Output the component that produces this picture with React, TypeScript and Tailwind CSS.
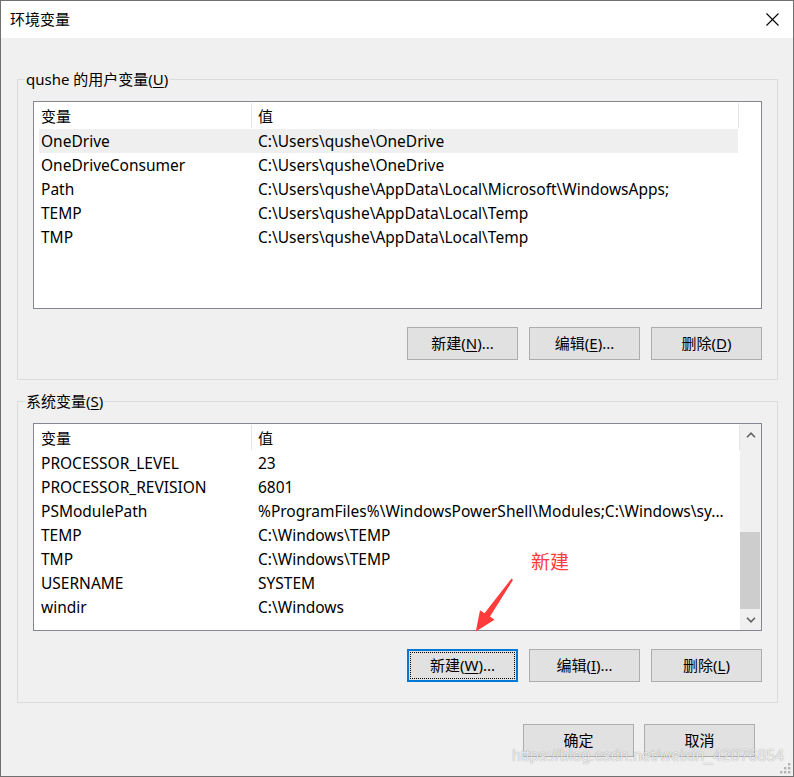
import type { ReactNode } from "react"

const userVars = [
  ["OneDrive", "C:\\Users\\qushe\\OneDrive"],
  ["OneDriveConsumer", "C:\\Users\\qushe\\OneDrive"],
  ["Path", "C:\\Users\\qushe\\AppData\\Local\\Microsoft\\WindowsApps;"],
  ["TEMP", "C:\\Users\\qushe\\AppData\\Local\\Temp"],
  ["TMP", "C:\\Users\\qushe\\AppData\\Local\\Temp"],
]

const sysVars = [
  ["PROCESSOR_LEVEL", "23"],
  ["PROCESSOR_REVISION", "6801"],
  ["PSModulePath", "%ProgramFiles%\\WindowsPowerShell\\Modules;C:\\Windows\\sy..."],
  ["TEMP", "C:\\Windows\\TEMP"],
  ["TMP", "C:\\Windows\\TEMP"],
  ["USERNAME", "SYSTEM"],
  ["windir", "C:\\Windows"],
]

function Btn({ children, focused }: { children: ReactNode; focused?: boolean }) {
  if (focused) {
    return (
      <button className="w-[111px] h-[33px] bg-[#e1e1e1] border-2 border-[#0078d7] p-[1px]">
        <div className="w-full h-full border border-dotted border-black flex items-center justify-center">
          {children}
        </div>
      </button>
    )
  }
  return (
    <button className="w-[111px] h-[33px] bg-[#e1e1e1] border border-[#adadad] flex items-center justify-center">
      {children}
    </button>
  )
}

function Header({ last }: { last: number }) {
  return (
    <div className="flex h-[27px]">
      <div className="w-[218px] pl-[7px] pt-[2px] flex items-center border-r border-[#e5e5e5] my-[1px]">变量</div>
      <div
        className={`${last === 487 ? "w-[487px]" : "w-[488px]"} pl-[6px] pt-[2px] flex items-center border-r border-[#e5e5e5] my-[1px]`}
      >
        值
      </div>
    </div>
  )
}

function Rows({ items, selected }: { items: string[][]; selected?: number }) {
  return (
    <div className="flex flex-col text-[15.5px]">
      {items.map(([name, value], i) => (
        <div
          key={i}
          className={`ml-[5px] w-[699px] h-[24px] pl-[2px] pt-[2px] flex items-center whitespace-nowrap ${
            i === selected ? "bg-[#efefef]" : ""
          }`}
        >
          <div className="w-[217px] shrink-0">{name}</div>
          <div className="overflow-hidden">{value}</div>
        </div>
      ))}
    </div>
  )
}

function Chevron({ up }: { up?: boolean }) {
  return (
    <svg width="10" height="6" viewBox="0 0 10 6" className="block">
      <path
        d={up ? "M1 5.2 L5 1.2 L9 5.2" : "M1 0.8 L5 4.8 L9 0.8"}
        fill="none"
        stroke="#606060"
        strokeWidth="1.6"
      />
    </svg>
  )
}

export default function App() {
  return (
    <div className="relative w-[794px] h-[777px] bg-[#f0f0f0] border border-[#707070] font-['Noto_Sans','Noto_Sans_CJK_SC',sans-serif] text-[15px] text-black overflow-hidden">
      {/* title bar */}
      <div className="h-[37px] bg-white flex items-center justify-between pl-[9px] pr-[14px] font-['Noto_Sans_CJK_SC',sans-serif]">
        <span>环境变量</span>
        <svg width="13" height="13" viewBox="0 0 13 13">
          <path d="M0.5 0.5 L12.5 12.5 M12.5 0.5 L0.5 12.5" stroke="#000" strokeWidth="1.1" />
        </svg>
      </div>

      {/* user variables */}
      <fieldset className="mt-[31px] ml-[16px] w-[761px] border border-[#dcdcdc] px-0 pb-[19px]">
        <legend className="ml-[7px] px-[1px] leading-[20px]">
          qushe 的用户变量(<span className="underline underline-offset-2">U</span>)
        </legend>
        <div className="px-[15px] pt-[12px]">
          <div className="w-[729px] h-[208px] bg-white border border-[#828790]">
            <Header last={487} />
            <Rows items={userVars} selected={0} />
          </div>
          <div className="mt-[18px] flex justify-end gap-[11px]">
            <Btn>
              新建(<span className="underline underline-offset-2">N</span>)...
            </Btn>
            <Btn>
              编辑(<span className="underline underline-offset-2">E</span>)...
            </Btn>
            <Btn>
              删除(<span className="underline underline-offset-2">D</span>)
            </Btn>
          </div>
        </div>
      </fieldset>

      {/* system variables */}
      <fieldset className="mt-[11px] ml-[16px] w-[761px] border border-[#dcdcdc] px-0 pb-[20px]">
        <legend className="ml-[7px] px-[1px] leading-[20px]">
          系统变量(<span className="underline underline-offset-2">S</span>)
        </legend>
        <div className="px-[15px] pt-[12px]">
          <div className="w-[729px] h-[208px] bg-white border border-[#828790] flex">
            <div className="w-[706px]">
              <Header last={488} />
              <Rows items={sysVars} />
            </div>
            <div className="w-[21px] bg-[#f0f0f0] flex flex-col">
              <div className="h-[21px] flex items-center justify-center">
                <Chevron up />
              </div>
              <div className="flex-1 flex flex-col justify-end">
                <div className="h-[77px] mr-[1px] bg-[#cdcdcd]" />
              </div>
              <div className="h-[21px] flex items-center justify-center">
                <Chevron />
              </div>
            </div>
          </div>
          <div className="mt-[18px] flex justify-end gap-[11px]">
            <Btn focused>
              新建(<span className="underline underline-offset-2">W</span>)...
            </Btn>
            <Btn>
              编辑(<span className="underline underline-offset-2">I</span>)...
            </Btn>
            <Btn>
              删除(<span className="underline underline-offset-2">L</span>)
            </Btn>
          </div>
        </div>
      </fieldset>

      {/* dialog buttons */}
      <div className="mt-[21px] pr-[38px] flex justify-end gap-[10px]">
        <Btn>确定</Btn>
        <Btn>取消</Btn>
      </div>

      {/* annotation */}
      <div className="absolute left-[530px] top-[549px] text-[19px] leading-[22px] text-[#ff3b3b] font-['Noto_Sans_CJK_SC',sans-serif]">
        新建
      </div>
      <svg className="absolute left-[469px] top-[569px]" width="50" height="70" viewBox="0 0 50 70">
        <polygon
          points="41.5,8.5 43,10 20,46.5 24.5,49.8 5.8,61.6 10,40.2 14.5,43.2"
          fill="#ff3b3b"
        />
      </svg>

      {/* watermark */}
      <div className="absolute left-[511px] top-[746px] font-['Liberation_Sans',sans-serif] text-[16px] leading-[18px] text-white/80 [text-shadow:0_0_1px_rgba(0,0,0,0.45)] whitespace-nowrap">
        https://blog.csdn.net/weixin_42076854
      </div>

      {/* size grip */}
      <svg className="absolute left-[778px] top-[761px]" width="12" height="12" viewBox="0 0 12 12">
        <rect x="9" y="1" width="2.4" height="2.4" fill="#b4b4b4" />
        <rect x="5" y="5" width="2.4" height="2.4" fill="#b4b4b4" />
        <rect x="9" y="5" width="2.4" height="2.4" fill="#b4b4b4" />
        <rect x="1" y="9" width="2.4" height="2.4" fill="#b4b4b4" />
        <rect x="5" y="9" width="2.4" height="2.4" fill="#b4b4b4" />
        <rect x="9" y="9" width="2.4" height="2.4" fill="#b4b4b4" />
      </svg>
    </div>
  )
}
